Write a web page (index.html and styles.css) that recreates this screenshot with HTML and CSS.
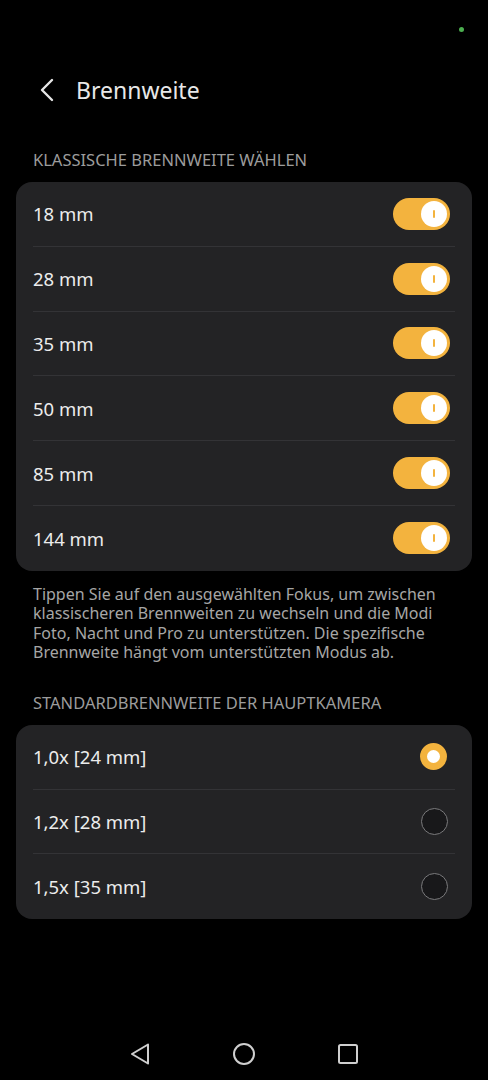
FILE: index.html
```html
<!DOCTYPE html>
<html lang="de">

<head>
    <meta charset="utf-8">
    <title>Brennweite</title>
    <link rel="stylesheet" href="styles.css">
</head>

<body>
    <div class="status">
        <span class="dot"></span>
    </div>

    <header class="topbar">
        <svg class="back" width="16" height="24" viewBox="0 0 16 24">
            <path d="M13 2 L3 12 L13 22" fill="none" stroke="#e6e6e6" stroke-width="2.4" stroke-linecap="round" stroke-linejoin="round"/>
        </svg>
        <h1>Brennweite</h1>
    </header>

    <h2 class="section-title">KLASSISCHE BRENNWEITE WÄHLEN</h2>
    <div class="card">
        <div class="row"><span>18 mm</span><span class="switch"><span class="thumb"></span></span></div>
        <div class="row"><span>28 mm</span><span class="switch"><span class="thumb"></span></span></div>
        <div class="row"><span>35 mm</span><span class="switch"><span class="thumb"></span></span></div>
        <div class="row"><span>50 mm</span><span class="switch"><span class="thumb"></span></span></div>
        <div class="row"><span>85 mm</span><span class="switch"><span class="thumb"></span></span></div>
        <div class="row"><span>144 mm</span><span class="switch"><span class="thumb"></span></span></div>
    </div>

    <p class="hint">Tippen Sie auf den ausgewählten Fokus, um zwischen klassischeren Brennweiten zu wechseln und die Modi Foto, Nacht und Pro zu unterstützen. Die spezifische Brennweite hängt vom unterstützten Modus ab.</p>

    <h2 class="section-title">STANDARDBRENNWEITE DER HAUPTKAMERA</h2>
    <div class="card">
        <div class="row"><span>1,0x [24 mm]</span><span class="radio checked"></span></div>
        <div class="row"><span>1,2x [28 mm]</span><span class="radio"></span></div>
        <div class="row"><span>1,5x [35 mm]</span><span class="radio"></span></div>
    </div>

    <nav class="navbar">
        <svg width="22" height="24" viewBox="0 0 22 24">
            <path d="M19 2.5 L3 12 L19 21.5 Z" fill="none" stroke="#cfcfcf" stroke-width="2" stroke-linejoin="round"/>
        </svg>
        <svg width="24" height="24" viewBox="0 0 24 24">
            <circle cx="12" cy="12" r="10" fill="none" stroke="#cfcfcf" stroke-width="2"/>
        </svg>
        <svg width="22" height="22" viewBox="0 0 22 22">
            <rect x="2" y="2" width="18" height="18" rx="1.5" fill="none" stroke="#cfcfcf" stroke-width="2"/>
        </svg>
    </nav>
</body>

</html>
```

FILE: styles.css
```css
body {
    margin: 0;
    background: #000;
    color: #ececec;
    font-family: "Noto Sans", Roboto, sans-serif;
    width: 488px;
    height: 1080px;
    position: relative;
    overflow: hidden;
}

.status {
    height: 60px;
    display: flex;
    justify-content: flex-end;
    padding: 27px 24px 0 0;
    box-sizing: border-box;
}

.dot {
    width: 5px;
    height: 5px;
    border-radius: 50%;
    background: #4caf50;
}

.topbar {
    display: flex;
    align-items: center;
    height: 60px;
    padding-left: 39px;
}

.back {
    margin-right: 21px;
}

h1 {
    margin: 0;
    font-size: 23px;
    font-weight: 400;
    color: #e8e8e8;
}

.section-title {
    margin: 30px 0 0;
    padding: 0 33px;
    height: 32px;
    font-size: 16.5px;
    font-weight: 400;
    color: #9c9c9c;
    line-height: 20px;
}

.card {
    margin: 0 16px;
    background: #232325;
    border-radius: 16px;
    padding: 0 17px;
}

.row {
    display: flex;
    align-items: center;
    justify-content: space-between;
    height: 64.8px;
    font-size: 18.5px;
    border-bottom: 1px solid #333336;
    box-sizing: border-box;
}

.row:last-child {
    border-bottom: none;
}

.switch {
    width: 57px;
    height: 32px;
    border-radius: 16px;
    background: #f3b33e;
    position: relative;
    margin-right: 5px;
}

.thumb {
    position: absolute;
    right: 3px;
    top: 3px;
    width: 26px;
    height: 26px;
    border-radius: 50%;
    background: #fff;
}

.thumb::after {
    content: "";
    position: absolute;
    left: 12px;
    top: 9px;
    width: 2px;
    height: 8px;
    border-radius: 1px;
    background: #f3b33e;
}

.radio {
    width: 25px;
    height: 25px;
    border-radius: 50%;
    border: 1.5px solid #7a7a7c;
    background: #18181a;
    margin-right: 7px;
}

.radio.checked {
    width: 13px;
    height: 13px;
    border: 7px solid #f3b33e;
    background: #fff;
    margin-right: 8px;
}

.hint {
    margin: 14px 0 7px;
    padding: 0 33px;
    font-size: 16px;
    line-height: 19.5px;
    color: #a6a6a6;
}

.navbar {
    position: absolute;
    left: 0;
    right: 0;
    bottom: 14px;
    display: flex;
    justify-content: center;
    align-items: center;
    gap: 81px;
}
```
